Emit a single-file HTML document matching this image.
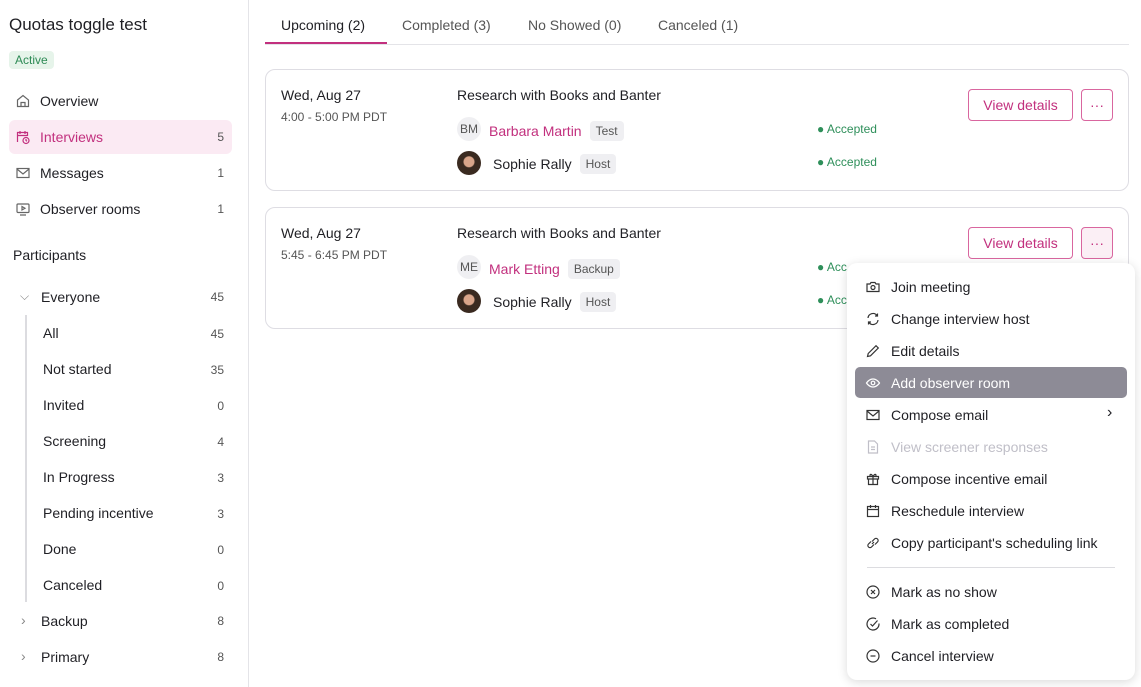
<!DOCTYPE html>
<html><head><meta charset="utf-8"><style>
*{box-sizing:border-box;margin:0;padding:0}
body{width:1141px;height:687px;overflow:hidden;background:#fff;font-family:"Liberation Sans",sans-serif;color:#1f1f24;font-size:14px;position:relative}
.a{position:absolute;white-space:nowrap}
.side{position:absolute;left:0;top:0;width:249px;height:687px;border-right:1px solid #e4e4e8}
.nav{position:absolute;left:9px;width:223px;height:34px;display:flex;align-items:center;padding-left:6px;font-size:14px}
.nav svg{margin-right:9px}
.nav .c{position:absolute;right:8px;font-size:12px;color:#555}
.sub{position:absolute;left:43px;width:181px;font-size:14px}
.sub .c{position:absolute;right:0;font-size:12px;color:#555;top:2px}
.card{position:absolute;left:265px;width:864px;height:122px;border:1px solid #dedde3;border-radius:10px}
.tag{display:inline-block;background:#efeff2;color:#555;font-size:12px;padding:3px 6px;border-radius:4px;margin-left:8px;vertical-align:1px}
.acc{color:#2e8f5a;font-size:12px}
.btn{position:absolute;border:1px solid #d9669f;border-radius:4px;color:#c2307e;font-size:14px;text-align:center;line-height:30px;height:32px;background:#fff}
.menu{position:absolute;left:847px;top:263px;width:288px;height:417px;background:#fff;border-radius:10px;box-shadow:0 2px 10px rgba(0,0,0,.15)}
.mi{position:absolute;left:18px;font-size:14px;display:flex;align-items:center;height:20px}
.mi svg{margin-right:10px}
</style></head><body>
<div class="side">
<div class="a" style="left:9px;top:15px;font-size:17px">Quotas toggle test</div>
<div class="a" style="left:9px;top:51px;background:#e6f4ea;color:#2d8a55;font-size:12px;padding:2px 6px;border-radius:4px">Active</div>
<div class="nav" style="top:84px"><svg width="16" height="16" viewBox="0 0 16 16" fill="none" stroke="#666" stroke-width="1.2"><path d="M2.5 7 8 2.5 13.5 7v6.5h-11z M6 13.5V9.5h4v4"/></svg>Overview</div>
<div class="nav" style="top:120px;background:#fbeaf3;border-radius:6px;color:#c2307e"><svg width="16" height="16" viewBox="0 0 16 16" fill="none" stroke="#c2307e" stroke-width="1.2"><path d="M2.5 13V3.5h10V7 M5 2v3 M10 2v3 M2.5 6.5h10"/><circle cx="11" cy="11.5" r="3"/><path d="M11 10v1.5l1 .7"/></svg>Interviews<span class="c">5</span></div>
<div class="nav" style="top:156px"><svg width="16" height="16" viewBox="0 0 16 16" fill="none" stroke="#666" stroke-width="1.2"><rect x="2" y="3.5" width="12" height="9"/><path d="M2 4l6 5 6-5"/></svg>Messages<span class="c">1</span></div>
<div class="nav" style="top:192px"><svg width="16" height="16" viewBox="0 0 16 16" fill="none" stroke="#666" stroke-width="1.2"><rect x="2" y="3" width="12" height="8.5" rx="1"/><path d="M7 5.5v3.5l3-1.75z M5 14h6"/></svg>Observer rooms<span class="c">1</span></div>
<div class="a" style="left:13px;top:247px;font-size:14px">Participants</div>
<div class="a" style="left:20px;top:289px;color:#888;font-size:12px">⌵</div>
<div class="a" style="left:41px;top:289px">Everyone</div><div class="a" style="right:24px;top:290px;font-size:12px;color:#555">45</div>
<div class="a" style="left:25px;top:315px;width:2px;height:287px;background:#dcdce0"></div>
<div class="sub" style="top:325px">All<span class="c">45</span></div>
<div class="sub" style="top:361px">Not started<span class="c">35</span></div>
<div class="sub" style="top:397px">Invited<span class="c">0</span></div>
<div class="sub" style="top:433px">Screening<span class="c">4</span></div>
<div class="sub" style="top:469px">In Progress<span class="c">3</span></div>
<div class="sub" style="top:505px">Pending incentive<span class="c">3</span></div>
<div class="sub" style="top:541px">Done<span class="c">0</span></div>
<div class="sub" style="top:577px">Canceled<span class="c">0</span></div>
<div class="a" style="left:21px;top:612px;color:#888">›</div><div class="a" style="left:41px;top:613px">Backup</div><div class="a" style="right:24px;top:614px;font-size:12px;color:#555">8</div>
<div class="a" style="left:21px;top:648px;color:#888">›</div><div class="a" style="left:41px;top:649px">Primary</div><div class="a" style="right:24px;top:650px;font-size:12px;color:#555">8</div>
</div>
<div class="a" style="left:265px;top:44px;width:864px;height:1px;background:#e4e4e8"></div>
<div class="a" style="left:265px;top:42px;width:122px;height:2px;background:#c2307e"></div>
<div class="a" style="left:281px;top:17px">Upcoming (2)</div>
<div class="a" style="left:402px;top:17px;color:#555">Completed (3)</div>
<div class="a" style="left:528px;top:17px;color:#555">No Showed (0)</div>
<div class="a" style="left:658px;top:17px;color:#555">Canceled (1)</div>

<div class="card" style="top:69px"></div>
<div class="card" style="top:207px"></div>

<div class="a" style="left:281px;top:87px">Wed, Aug 27</div>
<div class="a" style="left:281px;top:110px;font-size:12px;color:#555">4:00 - 5:00 PM PDT</div>
<div class="a" style="left:457px;top:87px">Research with Books and Banter</div>
<div class="a" style="left:457px;top:117px;width:24px;height:24px;border-radius:50%;background:#efeff2;font-size:12px;color:#555;text-align:center;line-height:24px">BM</div>
<div class="a" style="left:489px;top:121px;color:#c2307e">Barbara Martin<span class="tag">Test</span></div>
<div class="a" style="left:457px;top:151px;width:24px;height:24px;border-radius:50%;background:radial-gradient(circle at 50% 45%,#d9a58a 0 5px,#3a2a20 6px)"></div>
<div class="a" style="left:493px;top:154px">Sophie Rally<span class="tag">Host</span></div>
<div class="a acc" style="left:817px;top:122px">● Accepted</div>
<div class="a acc" style="left:817px;top:155px">● Accepted</div>
<div class="btn" style="left:968px;top:89px;width:105px">View details</div>
<div class="btn" style="left:1081px;top:89px;width:32px">···</div>

<div class="a" style="left:281px;top:225px">Wed, Aug 27</div>
<div class="a" style="left:281px;top:248px;font-size:12px;color:#555">5:45 - 6:45 PM PDT</div>
<div class="a" style="left:457px;top:225px">Research with Books and Banter</div>
<div class="a" style="left:457px;top:255px;width:24px;height:24px;border-radius:50%;background:#efeff2;font-size:12px;color:#555;text-align:center;line-height:24px">ME</div>
<div class="a" style="left:489px;top:259px;color:#c2307e">Mark Etting<span class="tag">Backup</span></div>
<div class="a" style="left:457px;top:289px;width:24px;height:24px;border-radius:50%;background:radial-gradient(circle at 50% 45%,#d9a58a 0 5px,#3a2a20 6px)"></div>
<div class="a" style="left:493px;top:292px">Sophie Rally<span class="tag">Host</span></div>
<div class="a acc" style="left:817px;top:260px">● Acc</div>
<div class="a acc" style="left:817px;top:293px">● Acc</div>
<div class="btn" style="left:968px;top:227px;width:105px">View details</div>
<div class="btn" style="left:1081px;top:227px;width:32px;background:#fbeff5">···</div>

<div class="menu">
<div class="a" style="left:8px;top:104px;width:272px;height:31px;background:#8d8b96;border-radius:5px"></div>
<div class="mi" style="top:14px"><svg width="16" height="16" viewBox="0 0 16 16" fill="none" stroke="#333" stroke-width="1.2"><path d="M2 5h3l1-1.5h4L11 5h3v7.5H2z"/><circle cx="8" cy="8.5" r="2"/></svg>Join meeting</div>
<div class="mi" style="top:46px"><svg width="16" height="16" viewBox="0 0 16 16" fill="none" stroke="#333" stroke-width="1.2"><path d="M3 7a5 5 0 0 1 9-2.5 M12.5 2.5v2.5H10 M13 9a5 5 0 0 1-9 2.5 M3.5 13.5V11H6"/></svg>Change interview host</div>
<div class="mi" style="top:78px"><svg width="16" height="16" viewBox="0 0 16 16" fill="none" stroke="#333" stroke-width="1.2"><path d="M2.5 13.5l.7-3L11 2.7l2.3 2.3-7.8 7.8z"/></svg>Edit details</div>
<div class="mi" style="top:110px;color:#fff"><svg width="16" height="16" viewBox="0 0 16 16" fill="none" stroke="#fff" stroke-width="1.2"><path d="M1.5 8s2.5-4 6.5-4 6.5 4 6.5 4-2.5 4-6.5 4-6.5-4-6.5-4z"/><circle cx="8" cy="8" r="1.8"/></svg>Add observer room</div>
<div class="mi" style="top:142px"><svg width="16" height="16" viewBox="0 0 16 16" fill="none" stroke="#333" stroke-width="1.2"><rect x="2" y="3.5" width="12" height="9"/><path d="M2 4l6 5 6-5"/></svg>Compose email</div>
<div class="a" style="left:260px;top:141px;font-size:16px">›</div>
<div class="mi" style="top:174px;color:#c0bfc8"><svg width="16" height="16" viewBox="0 0 16 16" fill="none" stroke="#c0bfc8" stroke-width="1.2"><path d="M3.5 2h6l3 3v9h-9z M6 8h4 M6 10.5h4"/></svg>View screener responses</div>
<div class="mi" style="top:206px"><svg width="16" height="16" viewBox="0 0 16 16" fill="none" stroke="#333" stroke-width="1.2"><path d="M2.5 5.5h11v2.5h-11z M3.5 8v5.5h9V8 M8 5.5v8 M8 5.5C6 2 4 3.5 5.5 5.5 M8 5.5c2-3.5 4-2 2.5 0"/></svg>Compose incentive email</div>
<div class="mi" style="top:238px"><svg width="16" height="16" viewBox="0 0 16 16" fill="none" stroke="#333" stroke-width="1.2"><rect x="2.5" y="3.5" width="11" height="10"/><path d="M2.5 6.5h11 M5.5 2v3 M10.5 2v3"/></svg>Reschedule interview</div>
<div class="mi" style="top:270px"><svg width="16" height="16" viewBox="0 0 16 16" fill="none" stroke="#333" stroke-width="1.2"><path d="M7 9l2-2 M6 6.5l-2.5 2.5a2 2 0 0 0 3 3L9 9.5 M10 9.5l2.5-2.5a2 2 0 0 0-3-3L7 6.5"/></svg>Copy participant's scheduling link</div>
<div class="a" style="left:20px;top:304px;width:248px;height:1px;background:#dcdce0"></div>
<div class="mi" style="top:319px"><svg width="16" height="16" viewBox="0 0 16 16" fill="none" stroke="#333" stroke-width="1.2"><circle cx="8" cy="8" r="6"/><path d="M6 6l4 4M10 6l-4 4"/></svg>Mark as no show</div>
<div class="mi" style="top:351px"><svg width="16" height="16" viewBox="0 0 16 16" fill="none" stroke="#333" stroke-width="1.2"><path d="M14 7.5A6 6 0 1 1 11 2.8"/><path d="M5.5 8l2 2 5-5.5"/></svg>Mark as completed</div>
<div class="mi" style="top:383px"><svg width="16" height="16" viewBox="0 0 16 16" fill="none" stroke="#333" stroke-width="1.2"><circle cx="8" cy="8" r="6"/><path d="M5.5 8h5"/></svg>Cancel interview</div>
</div>
</body></html>
